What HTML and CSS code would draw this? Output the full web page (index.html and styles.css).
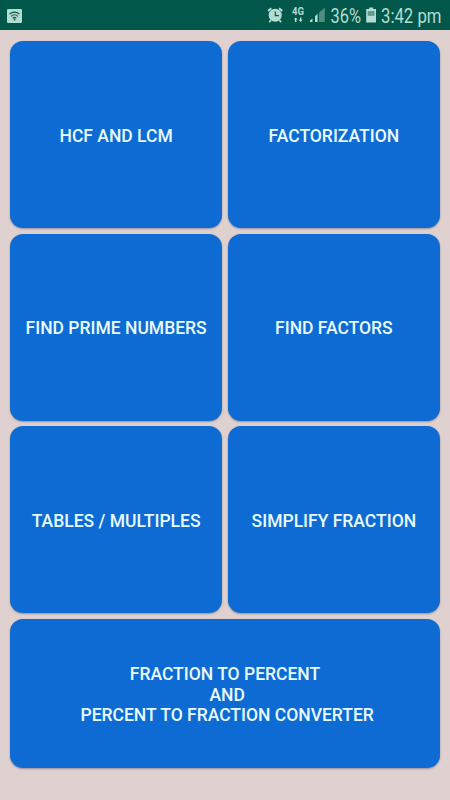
FILE: index.html
```
<!DOCTYPE html>
<html lang="en">
<head>
    <meta charset="UTF-8">
    <meta name="viewport" content="width=device-width, initial-scale=1.0">
    <title>HCF and LCM</title>
    <link rel="stylesheet" href="styles.css">
</head>
<body>
    <header class="status-bar">
        <svg class="wifi" width="15" height="14" viewBox="0 0 15 14">
            <rect width="15" height="14" rx="1.3" fill="#b5dcd2"/>
            <path d="M2.4 5.2Q7.5 1 12.6 5.2M4 7.3Q7.5 4.3 11 7.3M5.6 9.2Q7.5 7.6 9.4 9.2" fill="none" stroke="#0b5a4c" stroke-width="1.1"/>
            <circle cx="7.5" cy="10.6" r="1" fill="#0b5a4c"/>
        </svg>
        <!-- alarm, network, battery and clock -->
        <svg class="status" width="190" height="30" viewBox="-10 0 190 30">
            <g fill="none" stroke="#b5dcd2">
                <circle cx="5.2" cy="15.2" r="6.5" fill="#b5dcd2" stroke="none"/>
                <path d="M-1.9 11l3.2-2.8M12.3 11l-3.2-2.8" stroke-width="2"/>
                <path d="M1 20l-1.7 2.2M9.4 20l1.7 2.2" stroke-width="1.7"/>
                <path d="M5.4 11.6v4h3.6" stroke="#0b5a4c" stroke-width="1.3"/>
            </g>
            <text class="network" x="22" y="15.4" textLength="12" lengthAdjust="spacingAndGlyphs">4G</text>
            <path d="M25.7 17.4l2 2.2h-1.3v2.4h-1.4v-2.4h-1.3zM30.7 22l-2-2.2h1.3v-2.4h1.4v2.4h1.3z" fill="#b5dcd2"/>
            <path d="M40 22v-1.6l2.5-2V22zM45 22v-5.8l2.6-2.4V22z" fill="#b5dcd2"/>
            <path d="M49 22V12.6l5.8-4.8V22z" fill="#4f8d80"/>
            <text class="digits" x="60.5" y="22.6" textLength="30.5" lengthAdjust="spacingAndGlyphs">36%</text>
            <path d="M99.2 7.5h4v1.6h2.8V22.5h-9.8V9.1h3z" fill="#b5dcd2"/>
            <path d="M97.7 11h6.8v4.8h-6.8z" fill="#5f9b8f"/>
            <text class="digits" x="111" y="22.6" textLength="60.5" lengthAdjust="spacingAndGlyphs">3:42 pm</text>
        </svg>
    </header>

    <main class="menu">
        <button class="card">HCF AND LCM</button>
        <button class="card">FACTORIZATION</button>
        <button class="card">FIND PRIME NUMBERS</button>
        <button class="card">FIND FACTORS</button>
        <button class="card">TABLES / MULTIPLES</button>
        <button class="card">SIMPLIFY FRACTION</button>
        <button class="card wide">&nbsp;FRACTION TO PERCENT&nbsp;<br>&nbsp;AND<br>&nbsp;PERCENT TO FRACTION CONVERTER</button>
    </main>
</body>
</html>
```
FILE: styles.css
```
body {
    margin: 0;
    height: 800px;
    overflow: hidden;
    font-family: Roboto, sans-serif;
    background-color: #dfd1cf;
}

.status-bar {
    display: flex;
    justify-content: space-between;
    align-items: center;
    height: 30px;
    padding-left: 7px;
    background-color: #00574a;
}

.wifi {
    margin-top: 1px;
}

.status text {
    fill: #b5dcd2;
}

.network {
    font-size: 10px;
    font-weight: 700;
}

.digits {
    font-size: 19.5px;
}

.menu {
    display: grid;
    grid-template-columns: 1fr 1fr;
    grid-template-rows: 187px 187px 187px 149.5px;
    gap: 5.5px;
    padding: 11.4px 10px 0;
}

.card {
    padding: 2.5px 0 0;
    border: none;
    border-radius: 13px;
    font-family: inherit;
    font-size: 17.5px;
    font-weight: 500;
    line-height: 20.7px;
    color: #e9fbff;
    background-color: #0d6bd3;
    box-shadow: 0 1px 2px rgba(60, 60, 90, 0.45);
}

.wide {
    grid-column: span 2;
}
```
